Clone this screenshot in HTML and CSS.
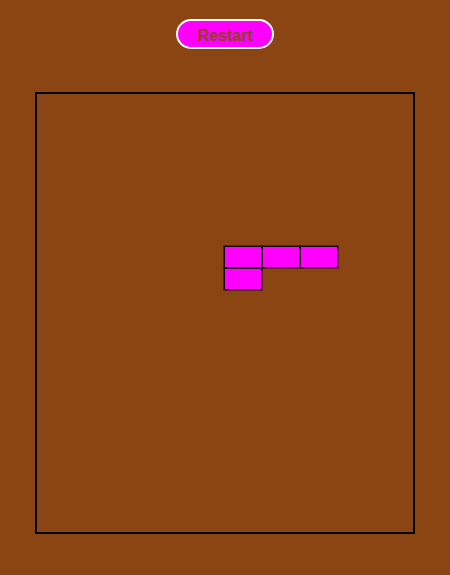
FILE: index.html
```html
<!DOCTYPE html>
<html>
<head>
<meta charset="utf-8">
<link rel="stylesheet" href="styles.css">
</head>
<body>
<div class="page">
  <button class="restart">Restart</button>
  <div class="board">
    <div class="cell" style="left:187px;top:152px"></div>
    <div class="cell" style="left:225px;top:152px"></div>
    <div class="cell" style="left:263px;top:152px"></div>
    <div class="cell" style="left:187px;top:174px"></div>
  </div>
</div>
</body>
</html>
```
FILE: styles.css
```css
html, body {
  margin: 0;
  padding: 0;
  background: #8B4513;
}
.page {
  width: 450px;
  height: 575px;
  display: flex;
  flex-direction: column;
  align-items: center;
  padding-top: 19px;
  box-sizing: border-box;
}
.restart {
  width: 98px;
  height: 30px;
  box-sizing: border-box;
  border: 2px solid #ffffff;
  border-radius: 15px;
  background: #ff00ff;
  color: #8B4513;
  font-family: "Liberation Sans", Arial, sans-serif;
  font-weight: bold;
  font-size: 16px;
  padding: 3px 0 0 0;
  margin: 0;
}
.board {
  position: relative;
  margin-top: 43px;
  width: 380px;
  height: 442px;
  box-sizing: border-box;
  border: 2px solid #000000;
}
.cell {
  position: absolute;
  width: 38px;
  height: 22px;
  box-sizing: border-box;
  border: 1px solid #1a0512;
  box-shadow: 0 0 0 1px rgba(50, 10, 40, 0.55);
  background: #ff00ff;
}
```
